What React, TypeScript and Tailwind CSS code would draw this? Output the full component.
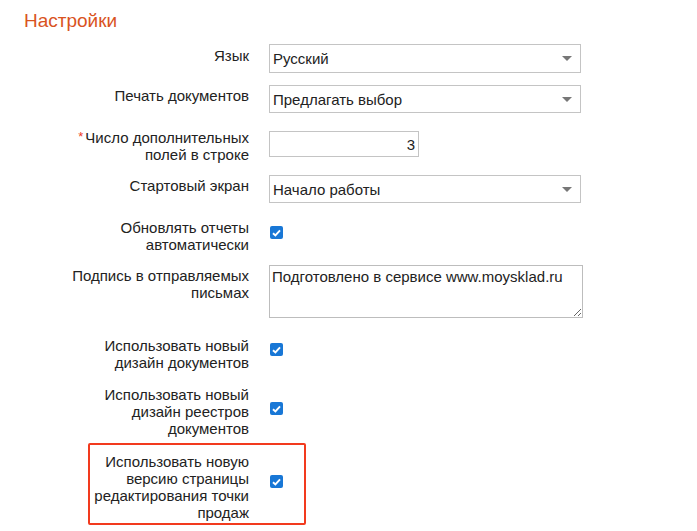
function Arrow() {
  return (
    <svg width="10" height="5" viewBox="0 0 10 5" className="mr-[8px] shrink-0">
      <polygon points="0,0 10,0 5,5" fill="#777777" />
    </svg>
  );
}

function Select({ value, h }: { value: string; h: string }) {
  return (
    <div className={`flex w-[312px] items-center justify-between border border-[#c4c4c4] bg-white pl-[3px] ${h}`}>
      <span>{value}</span>
      <Arrow />
    </div>
  );
}

function Check({ mt }: { mt: string }) {
  return (
    <span className={`flex h-[13px] w-[13px] items-center justify-center rounded-[2px] bg-[#1877d6] ${mt} ml-[1px]`}>
      <svg width="9" height="8" viewBox="0 0 9 8">
        <path d="M1 4.2 L3.4 6.5 L8 1.3" fill="none" stroke="#fff" strokeWidth="1.9" />
      </svg>
    </span>
  );
}

export default function App() {
  return (
    <div className="relative h-[531px] w-[697px] bg-white font-['Liberation_Sans',Arial,sans-serif] text-[15px] leading-[17px] text-[#222]">
      <h1 className="ml-[24px] pt-[10px] text-[19px] leading-[22px] text-[#d9531e]">Настройки</h1>

      <div className="ml-[59px] flex flex-col">
        <div className="mt-[12px] flex gap-[20px]">
          <div className="w-[190px] pt-[3px] text-right">Язык</div>
          <Select value="Русский" h="h-[29px]" />
        </div>

        <div className="mt-[12px] flex gap-[20px]">
          <div className="w-[190px] pt-[2px] text-right">Печать документов</div>
          <Select value="Предлагать выбор" h="h-[28px]" />
        </div>

        <div className="mt-[16px] flex h-[34px] gap-[20px]">
          <div className="w-[190px] text-right">
            <span className="relative top-[-2px] mr-[2px] text-[13px] leading-none text-[#ef3b24]">*</span>Число дополнительных
            <br />
            полей в строке
          </div>
          <div className="mt-[2px] flex h-[26px] w-[150px] items-center justify-end border border-[#c4c4c4] pr-[3px]">3</div>
        </div>

        <div className="mt-[12px] flex gap-[20px]">
          <div className="w-[190px] pt-[2px] text-right">Стартовый экран</div>
          <Select value="Начало работы" h="h-[28px]" />
        </div>

        <div className="mt-[16px] flex gap-[20px]">
          <div className="w-[190px] text-right">
            Обновлять отчеты
            <br />
            автоматически
          </div>
          <Check mt="mt-[7px]" />
        </div>

        <div className="mt-[12px] flex gap-[20px]">
          <div className="w-[190px] pt-[2px] text-right">
            Подпись в отправляемых
            <br />
            письмах
          </div>
          <textarea
            readOnly
            defaultValue="Подготовлено в сервисе www.moysklad.ru"
            className="h-[53px] w-[314px] border border-[#bdbdbd] px-[2px] py-[2px] text-[15px] leading-[17px] text-[#222] outline-none"
          />
        </div>

        <div className="mt-[19px] flex gap-[20px]">
          <div className="w-[190px] text-right">
            Использовать новый
            <br />
            дизайн документов
          </div>
          <Check mt="mt-[6px]" />
        </div>

        <div className="mt-[15px] flex gap-[20px]">
          <div className="w-[190px] text-right">
            Использовать новый
            <br />
            дизайн реестров
            <br />
            документов
          </div>
          <Check mt="mt-[16px]" />
        </div>

        <div className="mt-[16px] flex gap-[20px]">
          <div className="w-[190px] text-right">
            Использовать новую
            <br />
            версию страницы
            <br />
            редактирования точки
            <br />
            продаж
          </div>
          <Check mt="mt-[22px]" />
        </div>
      </div>

      {/* red annotation frame */}
      <div className="pointer-events-none absolute left-[88px] top-[443px] h-[82px] w-[218px] rounded-[2px] border-2 border-[#f23a1e]" />
    </div>
  );
}
